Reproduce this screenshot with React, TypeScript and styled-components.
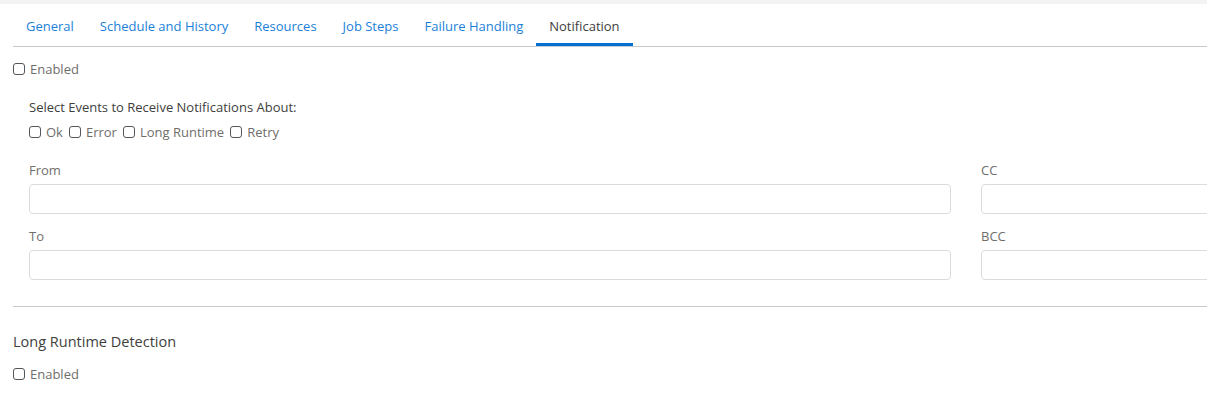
import React from "react";
import styled, { createGlobalStyle, css } from "styled-components";

const GlobalStyle = createGlobalStyle`
    html, body {
        margin: 0;
        padding: 0;
        background: #ffffff;
        overflow: hidden;
    }
    body {
        font-family: "Open Sans", "Noto Sans", Arial, sans-serif;
        font-size: 13px;
        color: #3e3e3c;
    }
`

const tabs = ["General", "Schedule and History", "Resources", "Job Steps", "Failure Handling", "Notification"];
const events = ["Ok", "Error", "Long Runtime", "Retry"];

const Check: React.FC<{ label: string; muted?: boolean }> = ({ label, muted }) => (
    <CheckLabel muted={muted}>
        <Box type="checkbox" />
        {label}
    </CheckLabel>
);

const App: React.FC = () => {
    return (
        <Page>
            <GlobalStyle />
            <TopStrip />
            <Body>
                <TabBar>
                    {tabs.map((t) => (
                        <Tab key={t} active={t === "Notification"}>{t}</Tab>
                    ))}
                </TabBar>

                <EnabledRow>
                    <Check label="Enabled" muted />
                </EnabledRow>

                <Section>
                    <SectionLabel>Select Events to Receive Notifications About:</SectionLabel>
                    <EventRow>
                        {events.map((e) => (
                            <Check key={e} label={e} muted />
                        ))}
                    </EventRow>

                    <FieldGrid>
                        <Field>
                            <FieldLabel>From</FieldLabel>
                            <Input />
                        </Field>
                        <Field>
                            <FieldLabel>CC</FieldLabel>
                            <Input />
                        </Field>
                        <Field>
                            <FieldLabel>To</FieldLabel>
                            <Input />
                        </Field>
                        <Field>
                            <FieldLabel>BCC</FieldLabel>
                            <Input />
                        </Field>
                    </FieldGrid>
                </Section>

                <Divider />

                <Heading>Long Runtime Detection</Heading>
                <Check label="Enabled" muted />
            </Body>
        </Page>
    );
}

export default App;

const Page = styled.div`
    width: 1207px;
    height: 397px;
    overflow: hidden;
`

const TopStrip = styled.div`
    height: 4px;
    background: #f3f3f3;
`

const Body = styled.div`
    padding-left: 13px;
    width: 2000px;
`

const TabBar = styled.div`
    display: flex;
    height: 43px;
    border-bottom: 1px solid #c9c9c9;
    box-sizing: border-box;
    width: 1194px;
`

interface TabProps {
    active?: boolean;
}

const Tab = styled.div<TabProps>`
    display: flex;
    align-items: center;
    padding: 4px 13px 0;
    color: #1b7fd9;
    font-size: 13px;
    box-sizing: border-box;
    border-bottom: 3px solid transparent;
    ${(p) => p.active && css`
        color: #3e3e3c;
        border-bottom-color: #0070d2;
    `}
`

const EnabledRow = styled.div`
    padding-top: 13px;
`

const CheckLabel = styled.label<{ muted?: boolean }>`
    display: inline-flex;
    align-items: center;
    gap: 5px;
    line-height: 18px;
    color: ${(p) => (p.muted ? "#706e6b" : "#3e3e3c")};
    font-size: 13px;
`

const Box = styled.input`
    appearance: none;
    margin: 0;
    width: 12px;
    height: 12px;
    border: 1px solid #54565a;
    border-radius: 3px;
    box-sizing: border-box;
    background: #fff;
`

const Section = styled.div`
    padding: 19px 0 0 16px;
`

const SectionLabel = styled.div`
    line-height: 18px;
    color: #3e3e3c;
`

const EventRow = styled.div`
    display: flex;
    gap: 6px;
    margin-top: 7px;
`

const FieldGrid = styled.div`
    display: grid;
    grid-template-columns: 922px 922px;
    column-gap: 30px;
    row-gap: 13px;
    margin-top: 20px;
`

const Field = styled.div`
    display: flex;
    flex-direction: column;
`

const FieldLabel = styled.div`
    color: #706e6b;
    line-height: 18px;
    margin-bottom: 5px;
`

const Input = styled.input`
    height: 30px;
    box-sizing: border-box;
    border: 1px solid #dddbda;
    border-radius: 4px;
    margin: 0;
    padding: 0 8px;
    font: inherit;
    width: 100%;
`

const Divider = styled.div`
    width: 1194px;
    height: 1px;
    background: #c9c9c9;
    margin-top: 26px;
`

const Heading = styled.div`
    font-size: 14.5px;
    line-height: 20px;
    color: #3e3e3c;
    margin-top: 25px;
    margin-bottom: 13px;
`
